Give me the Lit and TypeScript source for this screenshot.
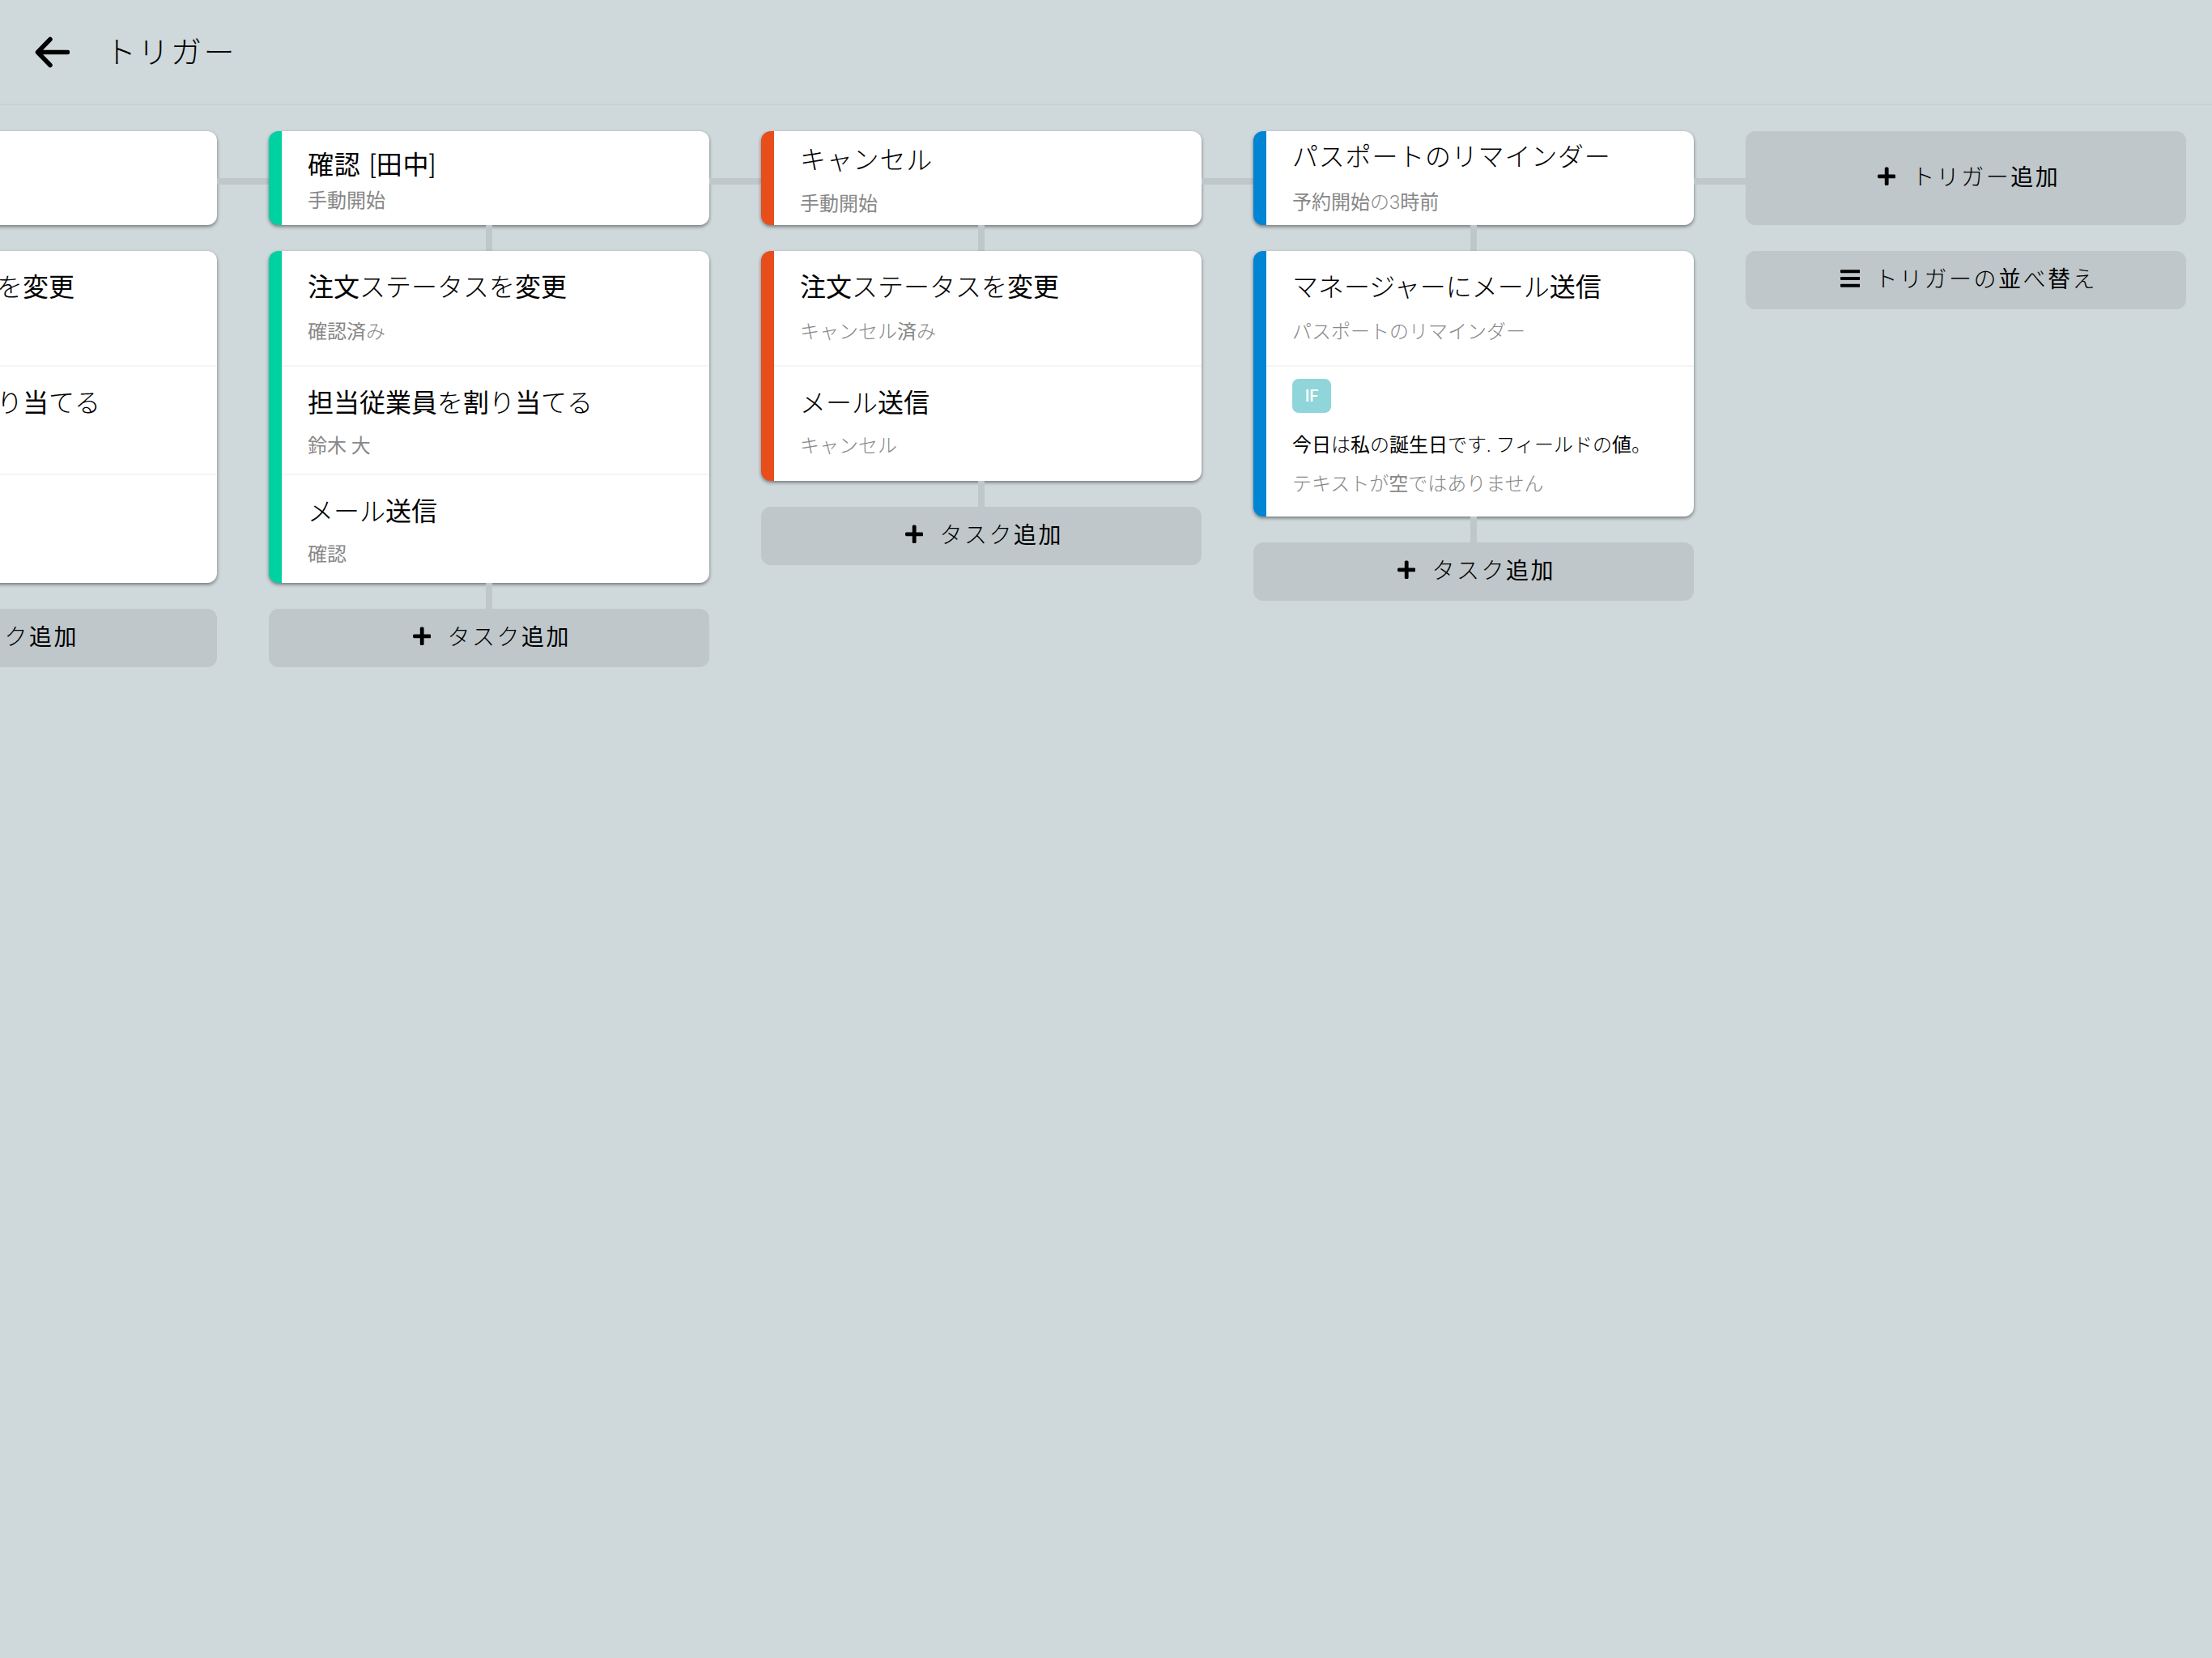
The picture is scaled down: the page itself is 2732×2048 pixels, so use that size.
import { LitElement, html, css } from "lit";
import { customElement } from "lit/decorators.js";

type Row = { t: string; s?: string; cond?: boolean; short?: boolean };
type Col = { accent: string; title: string; sub: string; kind: string; rows: Row[] };

const COLS: Col[] = [
  { accent: "#00d1a0", title: "新規予約", sub: "手動開始", kind: "k-a", rows: [
    { t: "注文ステータスを変更", s: "保留中" },
    { t: "担当従業員を割り当てる", s: "鈴木 大", short: true },
    { t: "メール送信", s: "確認", short: true } ] },
  { accent: "#00d1a0", title: "確認 [田中]", sub: "手動開始", kind: "k-a", rows: [
    { t: "注文ステータスを変更", s: "確認済み" },
    { t: "担当従業員を割り当てる", s: "鈴木 大", short: true },
    { t: "メール送信", s: "確認", short: true } ] },
  { accent: "#e84e1b", title: "キャンセル", sub: "手動開始", kind: "k-b", rows: [
    { t: "注文ステータスを変更", s: "キャンセル済み" },
    { t: "メール送信", s: "キャンセル" } ] },
  { accent: "#0085d4", title: "パスポートのリマインダー", sub: "予約開始の3時前", kind: "k-c", rows: [
    { t: "マネージャーにメール送信", s: "パスポートのリマインダー" },
    { t: "今日は私の誕生日です. フィールドの値。", s: "テキストが空ではありません", cond: true } ] },
];

const PLUS = "M416 208H272V64c0-17.67-14.33-32-32-32h-32c-17.67 0-32 14.33-32 32v144H32c-17.67 0-32 14.33-32 32v32c0 17.67 14.33 32 32 32h144v144c0 17.67 14.33 32 32 32h32c17.67 0 32-14.33 32-32V304h144c17.67 0 32-14.33 32-32v-32c0-17.67-14.33-32-32-32z";
const BARS = "M16 132h416c8.837 0 16-7.163 16-16V76c0-8.837-7.163-16-16-16H16C7.163 60 0 67.163 0 76v40c0 8.837 7.163 16 16 16zm0 160h416c8.837 0 16-7.163 16-16v-40c0-8.837-7.163-16-16-16H16c-8.837 0-16 7.163-16 16v40c0 8.837 7.163 16 16 16zm0 160h416c8.837 0 16-7.163 16-16v-40c0-8.837-7.163-16-16-16H16c-8.837 0-16 7.163-16 16v40c0 8.837 7.163 16 16 16z";

/* Kanji sit visibly heavier than the kana around them in the reference. */
const text = (s: string) =>
  s.split(/([\u4e00-\u9fff]+)/).map((p, i) => (i % 2 ? html`<span class="k">${p}</span>` : p));

@customElement("app-root")
export class AppRoot extends LitElement {
  static styles = css`
    :host {
      display: block;
      width: 2732px;
      height: 2048px;
      overflow: hidden;
      background: #cfd8db;
      color: #000;
      font-family: Roboto, "Noto Sans CJK JP", sans-serif;
      font-weight: 300;
    }
    .k { font-weight: 400; }
    .bar {
      display: flex;
      align-items: center;
      height: 128px;
      box-sizing: content-box;
      border-bottom: 2px solid #c8d1d4;
    }
    .back { width: 44px; height: 40px; margin-left: 42px; flex: none; }
    .page-title { margin-left: 44px; font-size: 38px; letter-spacing: 2.5px; line-height: 48px; margin-top: 2px; }
    .board { display: flex; align-items: flex-start; margin-left: -276px; padding-top: 32px; }
    .col { display: flex; flex-direction: column; align-items: stretch; width: 544px; flex: none; }
    .link { width: 64px; height: 8px; margin-top: 58px; background: #bfc7ca; flex: none; }
    .drop { width: 8px; height: 32px; background: #bfc7ca; align-self: center; flex: none; }
    .gap { height: 32px; }
    .card {
      background: #fff;
      border-radius: 12px;
      border-left: 16px solid var(--accent);
      box-shadow: 0 2px 4px rgba(0, 0, 0, 0.45);
      overflow: hidden;
    }
    .trigger { height: 116px; box-sizing: border-box; display: flex; flex-direction: column; padding-left: 32px; }
    .trigger .name { letter-spacing: 0.8px; word-spacing: 2px; }
    .k-a { padding-top: 20px; }
    .k-a .sub { margin-top: 4px; }
    .k-b { padding-top: 14px; }
    .k-b .sub { margin-top: 14px; }
    .k-c { padding-top: 10px; }
    .k-c .sub { margin-top: 16px; }
    .name { font-size: 32px; line-height: 44px; }
    .sub { font-size: 24px; line-height: 36px; color: #888; }
    .row { padding: 23px 32px 0; height: 143px; border-top: 2px solid #f5f5f5; box-sizing: border-box; }
    .row:first-child { border-top: 0; height: 141px; }
    .row .sub { margin-top: 13px; }
    .row:first-child .sub { margin-top: 15px; }
    .row.short { height: 134px; }
    .row.short:last-child { height: 135px; }
    .row.cond { height: 187px; padding-top: 15px; }
    .badge {
      width: 48px; height: 42px; border-radius: 8px; background: #8fd5da; color: #fff;
      font-size: 20px; font-weight: 500; display: flex; align-items: center; justify-content: center;
    }
    .cond-text { font-size: 24px; line-height: 36px; margin-top: 22px; }
    .row.cond .sub { margin-top: 12px; }
    .btn {
      display: flex; align-items: center; justify-content: center; gap: 20px;
      background: #bfc7ca; border-radius: 12px; height: 72px; box-sizing: border-box;
      padding: 0 0 4px 7px;
      font-size: 28px; letter-spacing: 2.5px;
    }
    .btn.sort { gap: 18px; }
    .btn span.label { margin-top: -3px; }
    .btn.tall { height: 116px; }
    .btn svg { width: 24.5px; height: 28px; flex: none; }
    .btn svg.plus { width: 22.4px; height: 25.6px; }
  `;

  private icon(d: string, cls = "") {
    return html`<svg class=${cls} viewBox="0 0 448 512" aria-hidden="true"><path d=${d} fill="#000"></path></svg>`;
  }

  private renderRow(r: Row) {
    if (r.cond) {
      return html`<div class="row cond">
        <div class="badge">IF</div>
        <div class="cond-text">${text(r.t)}</div>
        <div class="sub">${text(r.s ?? "")}</div>
      </div>`;
    }
    return html`<div class="row ${r.short ? "short" : ""}">
      <div class="name">${text(r.t)}</div>
      <div class="sub">${text(r.s ?? "")}</div>
    </div>`;
  }

  private renderCol(c: Col) {
    return html`<div class="col" style="--accent:${c.accent}">
        <div class="card trigger ${c.kind}">
          <div class="name">${text(c.title)}</div>
          <div class="sub">${text(c.sub)}</div>
        </div>
        <div class="drop"></div>
        <div class="card">${c.rows.map((r) => this.renderRow(r))}</div>
        <div class="drop"></div>
        <div class="btn">${this.icon(PLUS, "plus")}<span class="label">${text("タスク追加")}</span></div>
      </div>
      <div class="link"></div>`;
  }

  render() {
    return html`
      <div class="bar">
        <svg class="back" viewBox="0 0 44 40" aria-hidden="true">
          <path d="M41.5 20.5H5M20 4.5L4.5 20.5L20 36.5" fill="none" stroke="#000" stroke-width="5.5" stroke-linecap="round" stroke-linejoin="round"></path>
        </svg>
        <div class="page-title">トリガー</div>
      </div>
      <div class="board">
        ${COLS.map((c) => this.renderCol(c))}
        <div class="col">
          <div class="btn tall">${this.icon(PLUS, "plus")}<span class="label">${text("トリガー追加")}</span></div>
          <div class="gap"></div>
          <div class="btn sort">${this.icon(BARS)}<span class="label">${text("トリガーの並べ替え")}</span></div>
        </div>
      </div>
    `;
  }
}
